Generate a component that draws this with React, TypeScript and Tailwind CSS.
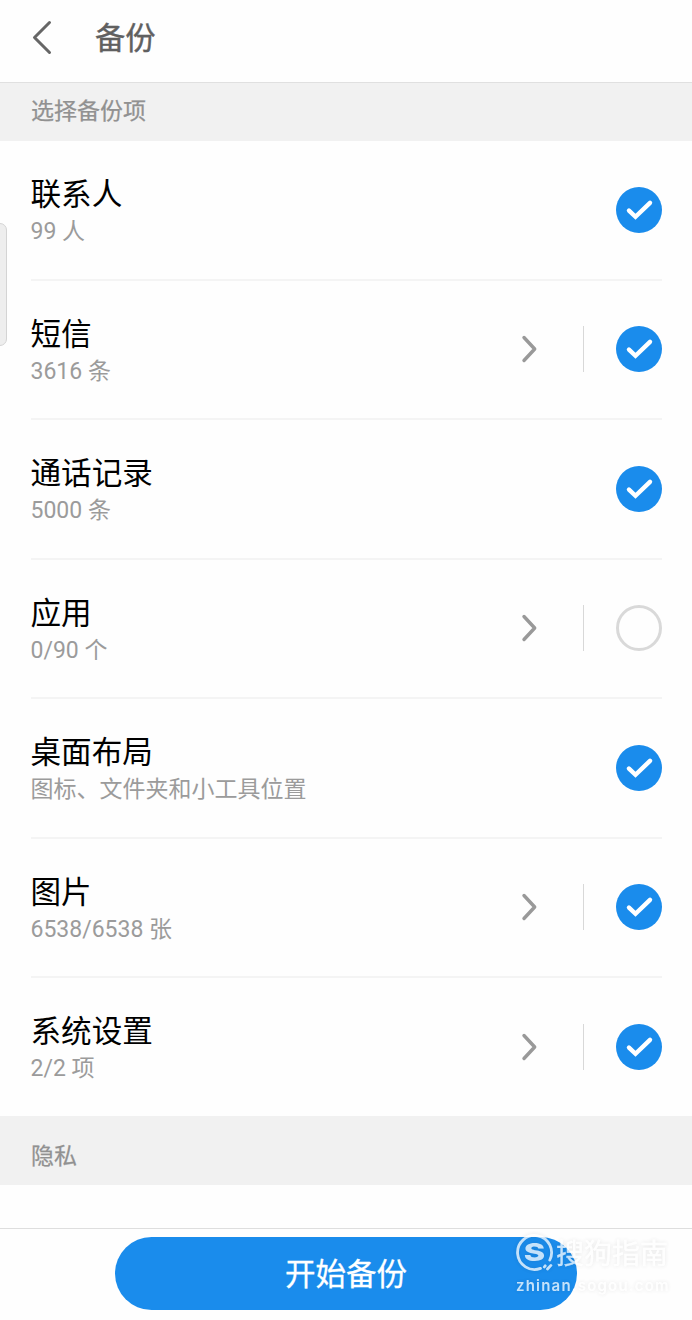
import { useState } from 'react'
import { clsx } from 'clsx'

interface BackupItem {
  id: string
  title: string
  detail: string
  hasMore?: boolean
  checked: boolean
}

const ITEMS: BackupItem[] = [
  { id: 'contacts', title: '联系人', detail: '99 人', checked: true },
  { id: 'sms', title: '短信', detail: '3616 条', hasMore: true, checked: true },
  { id: 'calls', title: '通话记录', detail: '5000 条', checked: true },
  { id: 'apps', title: '应用', detail: '0/90 个', hasMore: true, checked: false },
  { id: 'layout', title: '桌面布局', detail: '图标、文件夹和小工具位置', checked: true },
  { id: 'photos', title: '图片', detail: '6538/6538 张', hasMore: true, checked: true },
  { id: 'settings', title: '系统设置', detail: '2/2 项', hasMore: true, checked: true },
]

export default function App() {
  const [items, setItems] = useState(ITEMS)

  const toggle = (id: string) =>
    setItems((prev) =>
      prev.map((it) => (it.id === id ? { ...it, checked: !it.checked } : it)),
    )

  return (
    <div className="relative flex h-[1320px] w-full flex-col overflow-hidden bg-[#fefefe] font-[Roboto,'Noto_Sans_CJK_SC',sans-serif]">
      <header className="flex h-[82px] shrink-0 items-center pb-2 pl-[31px]">
        <button type="button" className="flex w-16 items-center">
          <svg className="h-9 w-6" viewBox="0 0 24 36" fill="none">
            <path
              d="M18.5 3.5 3.5 18.5l15 15"
              stroke="#666"
              strokeWidth="3"
              strokeLinecap="round"
              strokeLinejoin="round"
            />
          </svg>
        </button>
        <h1 className="pt-[3px] text-[30.3px] leading-10 text-[#606060] [-webkit-text-stroke:0.4px_#606060]">
          备份
        </h1>
      </header>

      <SectionTitle className="h-[59px] border-t border-[#e0e0e0]">
        选择备份项
      </SectionTitle>

      <ul className="shrink-0">
        {items.map((item) => (
          <BackupRow key={item.id} item={item} onToggle={() => toggle(item.id)} />
        ))}
      </ul>

      <SectionTitle className="h-[69px] pt-3">隐私</SectionTitle>

      <footer className="mt-auto flex h-[92px] shrink-0 justify-center border-t border-[#dedede] pt-2">
        <button
          type="button"
          className="h-[73px] w-[462px] rounded-full bg-[#1a8cec] pt-0.5 text-[30.5px] leading-[71px] text-white [-webkit-text-stroke:0.3px_white]"
        >
          开始备份
        </button>
      </footer>

      {/* edge panel handle */}
      <div className="absolute top-[223px] -left-3 h-[123px] w-[19px] rounded-[7px] border border-[#d4d4d4] bg-[#eee]" />

      <Watermark />
    </div>
  )
}

function SectionTitle({
  className,
  children,
}: {
  className?: string
  children: React.ReactNode
}) {
  return (
    <h2
      className={clsx(
        'flex shrink-0 items-center bg-[#f1f1f1] pl-[31px] text-[23px] leading-8 text-[#919191] [-webkit-text-stroke:0.25px_#919191]',
        className,
      )}
    >
      {children}
    </h2>
  )
}

function BackupRow({ item, onToggle }: { item: BackupItem; onToggle: () => void }) {
  return (
    <li className="mr-[30px] ml-[31px] flex h-[139.5px] items-center border-b-2 border-[#f4f4f4] last:h-[138px] last:border-b-0">
      <div className="-ml-[0.5px] min-w-0 flex-1 pt-[2.5px]">
        <p className="text-[30.6px] leading-[42px] text-black">{item.title}</p>
        <p className="text-[23px] leading-8 text-[#9b9b9b]">{item.detail}</p>
      </div>
      {item.hasMore && (
        <>
          <svg className="mr-[44px] h-8 w-5" viewBox="0 0 20 32" fill="none">
            <path
              d="M5 4.5 15.7 16 5 27.5"
              stroke="#999"
              strokeWidth="3.4"
              strokeLinecap="round"
              strokeLinejoin="round"
            />
          </svg>
          <span className="mr-8 h-[46px] w-px bg-[#d8d8d8]" />
        </>
      )}
      <button
        type="button"
        onClick={onToggle}
        className={clsx(
          'grid h-[46px] w-[46px] place-items-center rounded-full',
          item.checked ? 'bg-[#1a8cec]' : 'border-[3px] border-[#d9d9d9]',
        )}
      >
        {item.checked && (
          <svg className="h-[46px] w-[46px]" viewBox="0 0 46 46" fill="none">
            <path
              d="m13 23.6 6.5 6.2L34 15.8"
              stroke="white"
              strokeWidth="4.4"
              strokeLinecap="round"
            />
          </svg>
        )}
      </button>
    </li>
  )
}

function Watermark() {
  return (
    <div className="pointer-events-none absolute top-[1234px] left-[516px] w-[156px] text-white opacity-75 [filter:drop-shadow(0_0_2px_rgba(0,0,0,0.13))]">
      <div className="flex h-[38px] items-center">
        <svg className="h-[38px] w-[38px] shrink-0" viewBox="0 0 38 38" fill="none">
          <path
            d="M24.5 34.4A17 17 0 1 1 33.8 26M28.3 33l.9-1.2M31.5 35l3.4-3.6"
            stroke="white"
            strokeWidth="2.8"
            strokeLinecap="round"
          />
          <text
            x="0"
            y="0"
            transform="translate(18.4 27) scale(1.3 1)"
            textAnchor="middle"
            fill="white"
            fontFamily="Inter, sans-serif"
            fontWeight="800"
            fontSize="25"
          >
            S
          </text>
        </svg>
        <span className="ml-0.5 pt-1 text-[28px] leading-[38px] whitespace-nowrap [-webkit-text-stroke:0.3px_white]">
          搜狗指南
        </span>
      </div>
      <p className="mt-1 font-[Inter,sans-serif] text-[15px] leading-5 font-semibold tracking-[1.2px] whitespace-nowrap">
        zhinan.sogou.com
      </p>
    </div>
  )
}
